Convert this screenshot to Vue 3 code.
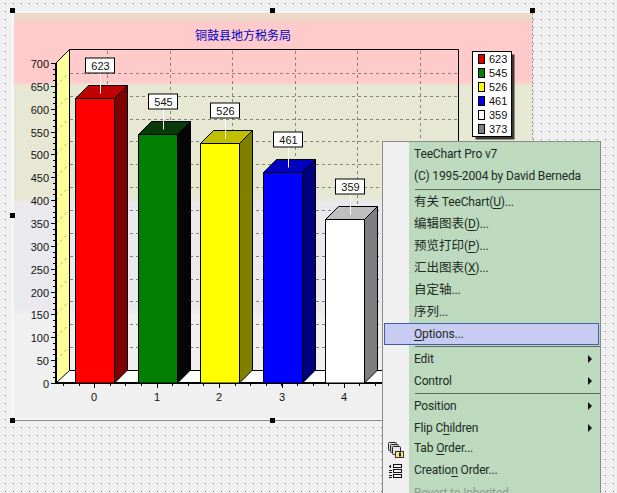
<script setup>
const H0 = 383
const scale = 320 / 700
const bars = [
  { v: 623, x: 75.5, f: '#ff0000', t: '#bf0000', s: '#7f0000', lx: 85.5 },
  { v: 545, x: 138.5, f: '#007f00', t: '#005f00', s: '#003f00', lx: 148.5, t2: '#0a3a0a', s2: '#050505' },
  { v: 526, x: 200.5, f: '#ffff00', t: '#bfbf00', s: '#7f7f00', lx: 210.5 },
  { v: 461, x: 263.5, f: '#0000ff', t: '#0000bf', s: '#00007f', lx: 273.5 },
  { v: 359, x: 325.5, f: '#ffffff', t: '#bfbfbf', s: '#7f7f7f', lx: 335.5 }
].map(b => {
  const y = Math.round(H0 - b.v * scale) + 0.5
  const r = b.x + 39
  return {
    ...b,
    y,
    r,
    front: `${b.x},${y} ${r},${y} ${r},${H0} ${b.x},${H0}`,
    top: `${b.x},${y} ${b.x + 13},${y - 13} ${r + 13},${y - 13} ${r},${y}`,
    side: `${r},${y} ${r + 13},${y - 13} ${r + 13},${H0 - 13} ${r},${H0}`,
    topFill: b.t2 || b.t,
    sideFill: b.s2 || b.s,
    ly: y - 40.5
  }
})
const yTicks = Array.from({ length: 15 }, (_, i) => ({ v: i * 50, y: 383 - i * 22.857 }))
const minorY = Array.from({ length: 57 }, (_, i) => 383 - i * 5.714)
const vGrid = [107.5, 170.5, 232.5, 295.5, 357.5, 420.5]
const xLabels = [94, 157, 219, 282, 344]
const minorX = Array.from({ length: 26 }, (_, i) => 63 + i * 15.6)
const legend = [
  { v: 623, c: '#e00000' }, { v: 545, c: '#007f00' }, { v: 526, c: '#ffff00' },
  { v: 461, c: '#0000ee' }, { v: 359, c: '#ffffff' }, { v: 373, c: '#808080' }
]
const handles = [[10, 8], [270, 8], [530, 8], [10, 213], [10, 418], [270, 418]]
const menu = [
  [{ a: 'TeeChart Pro v7' }],
  [{ a: '(C) 1995-2004 by David Berneda' }],
  'sep',
  [{ c: '有关' }, { a: ' TeeChart(' }, { u: 'U' }, { a: ')...' }],
  [{ c: '编辑图表' }, { a: '(' }, { u: 'D' }, { a: ')...' }],
  [{ c: '预览打印' }, { a: '(' }, { u: 'P' }, { a: ')...' }],
  [{ c: '汇出图表' }, { a: '(' }, { u: 'X' }, { a: ')...' }],
  [{ c: '自定轴' }, { a: '...' }],
  [{ c: '序列' }, { a: '...' }]
]
const menu2 = [
  'sep',
  { parts: [{ a: 'Edit' }], sub: true },
  { parts: [{ a: 'Control' }], sub: true },
  'sep',
  { parts: [{ a: 'Position' }], sub: true },
  { parts: [{ a: 'Flip C' }, { u: 'h' }, { a: 'ildren' }], sub: true, short: true },
  { parts: [{ a: 'Tab ' }, { u: 'O' }, { a: 'rder...' }], icon: 'tab' },
  { parts: [{ a: 'Creatio' }, { u: 'n' }, { a: ' Order...' }], icon: 'create' },
  { parts: [{ a: 'Revert to Inherited' }], off: true }
]
</script>

<template>
  <div class="canvas">
    <svg class="chart" width="617" height="493" viewBox="0 0 617 493">
      <defs>
        <linearGradient id="bands" x1="0" y1="0" x2="0" y2="1">
          <stop offset="0" stop-color="#ecd8c8" />
          <stop offset="0.012" stop-color="#ecd8c8" />
          <stop offset="0.028" stop-color="#ffcaca" />
          <stop offset="0.17" stop-color="#ffcaca" />
          <stop offset="0.18" stop-color="#e6e8d4" />
          <stop offset="0.455" stop-color="#e6e8d4" />
          <stop offset="0.47" stop-color="#e9e9ee" />
          <stop offset="0.73" stop-color="#e9e9ee" />
          <stop offset="0.75" stop-color="#f0f0f0" />
          <stop offset="1" stop-color="#f0f0f0" />
        </linearGradient>
      </defs>
      <rect x="11" y="11" width="522" height="410" fill="#f6f6f6" />
      <rect x="14" y="13" width="519" height="405" fill="url(#bands)" />
      <line x1="12" y1="420.5" x2="533" y2="420.5" stroke="#8a8a8a" />
      <line x1="532.5" y1="13" x2="532.5" y2="421" stroke="#9a9a9a" stroke-dasharray="2 2" />

      <text x="243" y="40" class="title" text-anchor="middle">铜鼓县地方税务局</text>

      <!-- walls -->
      <polygon points="56,63 69,50 69,370 56,383" fill="#ffff99" />
      <polygon points="56,383 69,370 500,370 490,383" fill="#ffffff" />
      <g stroke="#85857a" stroke-dasharray="3 3" fill="none" shape-rendering="crispEdges">
        <line v-for="t in yTicks.slice(1, 14)" :key="'h' + t.v" x1="70" :y1="Math.round(t.y - 13) + 0.5" x2="458" :y2="Math.round(t.y - 13) + 0.5" />
        <line v-for="x in vGrid" :key="'v' + x" :x1="x" y1="51" :x2="x" y2="370" />
      </g>
      <g stroke="#b4b470" stroke-dasharray="3 3" fill="none">
        <line v-for="t in yTicks.slice(1, 14)" :key="'d' + t.v" x1="56" :y1="t.y" x2="69" :y2="t.y - 13" />
      </g>
      <path d="M56 63 L69.5 49.5 H458.5 V370 M69.5 49.5 V370.5 H470 M69.5 370.5 L56 383" fill="none" stroke="#000" />
      <line x1="56" y1="63" x2="56" y2="384" stroke="#000" stroke-width="2" />
      <line x1="55" y1="383" x2="470" y2="383" stroke="#000" stroke-width="2" />

      <!-- axis -->
      <g stroke="#000" shape-rendering="crispEdges">
        <line v-for="y in minorY" :key="'my' + y" x1="53" :y1="Math.round(y) + 0.5" x2="55" :y2="Math.round(y) + 0.5" />
        <line v-for="t in yTicks" :key="'ty' + t.v" x1="51" :y1="Math.round(t.y) + 0.5" x2="55" :y2="Math.round(t.y) + 0.5" />
        <line v-for="x in minorX" :key="'mx' + x" :x1="Math.round(x) + 0.5" y1="384" :x2="Math.round(x) + 0.5" y2="386" />
        <line v-for="x in xLabels" :key="'tx' + x" :x1="x + 0.5" y1="384" :x2="x + 0.5" y2="388" />
      </g>
      <text v-for="t in yTicks" :key="'yl' + t.v" x="49" :y="t.y + 5" class="tick" text-anchor="end">{{ t.v }}</text>
      <text v-for="(x, i) in xLabels" :key="'xl' + x" :x="x" y="401" class="tick" text-anchor="middle">{{ i }}</text>

      <!-- bars -->
      <g v-for="b in bars" :key="b.v" stroke="#000">
        <polygon :points="b.side" :fill="b.sideFill" />
        <polygon :points="b.top" :fill="b.topFill" />
        <polygon :points="b.front" :fill="b.f" />
      </g>
      <g v-for="b in bars" :key="'l' + b.v">
        <line :x1="b.lx + 15" :y1="b.ly + 15" :x2="b.lx + 15" :y2="b.y - 5" stroke="#fff" />
        <rect :x="b.lx" :y="b.ly" width="29" height="15" fill="#fff" stroke="#000" />
        <text :x="b.lx + 15" :y="b.ly + 11.5" class="tick" text-anchor="middle">{{ b.v }}</text>
      </g>

      <!-- legend -->
      <rect x="475.5" y="54.5" width="39" height="85" fill="#000" opacity="0.75" />
      <rect x="472.5" y="51.5" width="39" height="85" fill="#fff" stroke="#000" />
      <g v-for="(l, i) in legend" :key="'lg' + i">
        <rect x="478.5" :y="54.5 + i * 14" width="6" height="9" :fill="l.c" stroke="#000" />
        <text x="489" :y="63 + i * 14" class="tick">{{ l.v }}</text>
      </g>

      <rect v-for="(h, i) in handles" :key="'hd' + i" :x="h[0]" :y="h[1]" width="5" height="5" fill="#000" />
    </svg>

    <div class="menu">
      <div class="gutter"></div>
      <div class="items">
        <template v-for="(row, i) in menu" :key="'m' + i">
          <div v-if="row === 'sep'" class="sep first"></div>
          <div v-else class="row">
            <span class="label"><template v-for="(p, j) in row" :key="j"><u v-if="p.u">{{ p.u }}</u><span v-else-if="p.c" class="cjk">{{ p.c }}</span><template v-else>{{ p.a }}</template></template></span>
          </div>
        </template>
        <div class="row active">
          <span class="label"><u>O</u>ptions...</span>
        </div>
        <template v-for="(row, i) in menu2" :key="'n' + i">
          <div v-if="row === 'sep'" class="sep"></div>
          <div v-else class="row" :class="{ off: row.off, short: row.short, iconed: row.icon }">
            <span v-if="row.icon" class="icon">
              <svg v-if="row.icon === 'tab'" width="16" height="16" viewBox="0 0 16 16">
                <rect x="0.5" y="0.5" width="8" height="8" rx="1" fill="#dfe3df" stroke="#222" />
                <rect x="2.5" y="2.5" width="8" height="8" rx="1" fill="#c4cfc6" stroke="#222" />
                <rect x="4.5" y="4.5" width="8" height="8" rx="1" fill="#e6e8e6" stroke="#222" />
                <rect x="7.5" y="9.5" width="8" height="6" fill="#f2e98a" stroke="#333" />
                <rect x="11" y="10.5" width="2" height="4" fill="#222" />
              </svg>
              <svg v-else width="16" height="16" viewBox="0 0 16 16">
                <g fill="#111">
                  <rect x="1" y="2" width="2" height="1" /><rect x="2" y="1" width="1" height="3" />
                  <rect x="1" y="6" width="3" height="1" /><rect x="1" y="8" width="3" height="1" />
                  <rect x="1" y="11" width="3" height="1" /><rect x="1" y="13" width="3" height="1" />
                </g>
                <g fill="#eef2ee" stroke="#111">
                  <rect x="5.5" y="0.5" width="8" height="3" />
                  <rect x="5.5" y="5.5" width="8" height="3" />
                  <rect x="5.5" y="10.5" width="8" height="3" />
                </g>
              </svg>
            </span>
            <span class="label"><template v-for="(p, j) in row.parts" :key="j"><u v-if="p.u">{{ p.u }}</u><template v-else>{{ p.a }}</template></template></span>
            <span v-if="row.sub" class="arrow"></span>
          </div>
        </template>
      </div>
    </div>
  </div>
</template>

<style>
html, body { margin: 0; overflow: hidden; }
</style>

<style scoped>
.canvas {
  position: relative;
  width: 617px;
  height: 493px;
  overflow: hidden;
  background-color: #f0f0f0;
  background-image: conic-gradient(from 0deg at 1px 1px, transparent 75%, #77777a 0);
  background-size: 8px 8px;
  background-position: 5px 3px;
}
.chart { display: block; }
.title {
  font: 12px "Noto Sans CJK SC", sans-serif;
  fill: #0000cc;
}
.tick {
  font: 11px "Liberation Sans", Arial, sans-serif;
  fill: #111;
}
.menu {
  position: absolute;
  left: 382px;
  top: 141px;
  width: 217px;
  height: 360px;
  border: 1px solid #8a8a8a;
  display: flex;
  background: #bdd9be;
}
.gutter {
  position: absolute;
  left: 0;
  top: 0;
  bottom: 0;
  width: 26px;
  background: #f0f0f0;
}
.items {
  position: relative;
  flex: 1;
  padding-top: 1px;
}
.row {
  position: relative;
  height: 22px;
  padding-left: 31px;
  font: 12px/22px Roboto, "Noto Sans CJK SC", sans-serif;
  letter-spacing: -0.15px;
  color: #1b2b1f;
  white-space: nowrap;
}
.row.short { height: 21px; }
.row.iconed { line-height: 21px; }
.cjk {
  font-size: 12.5px;
  letter-spacing: 0;
}
.row.off { color: #8d9e8f; }
.row.active {
  margin: 0 1px;
  padding-left: 29px;
  height: 20px;
  line-height: 20px;
  border: 1px solid #3f5fa8;
  background: #c8ccf2;
}
.row u { text-underline-offset: 2px; }
.sep {
  height: 3px;
  position: relative;
}
.sep::after {
  content: "";
  position: absolute;
  left: 32px;
  right: 0;
  top: 1px;
  height: 1px;
  background: #5b6b5c;
}
.sep.first { height: 4px; }
.sep.first::after { top: 2px; }
.icon {
  position: absolute;
  left: 5px;
  top: 4px;
  width: 16px;
  height: 16px;
}
.icon svg { display: block; }
.arrow {
  position: absolute;
  right: 8px;
  top: 7px;
  width: 0;
  height: 0;
  border-left: 4px solid #111;
  border-top: 4px solid transparent;
  border-bottom: 4px solid transparent;
}
</style>
